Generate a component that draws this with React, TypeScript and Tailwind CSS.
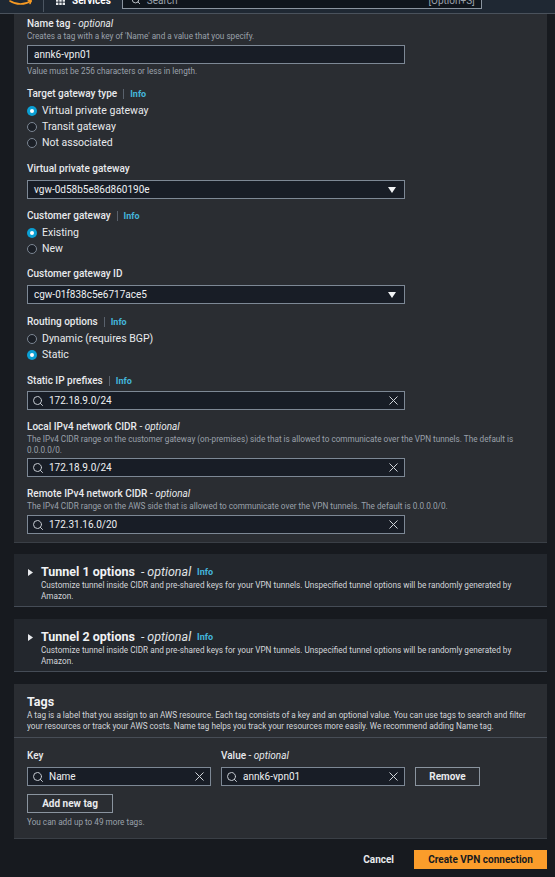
import React from 'react';
import { Search, X } from 'lucide-react';

const Info = ({ className = '' }: { className?: string }) => (
  <span className={`text-[9px] font-bold text-[#44b6dc] ${className}`}>Info</span>
);

function Label({ children, info }: { children: React.ReactNode; info?: boolean }) {
  return (
    <div className="flex h-[14px] items-center text-[10px] font-medium leading-[14px] text-[#e8eaed]">
      <span>{children}</span>
      {info && (
        <>
          <span className="mx-[6px] h-[10px] w-px bg-[#59616c]" />
          <Info />
        </>
      )}
    </div>
  );
}

const Optional = () => (
  <span className="font-normal">
    {' '}- <i>optional</i>
  </span>
);

function Desc({ children }: { children: React.ReactNode }) {
  return <div className="text-[8.2px] leading-[11px] text-[#9aa1ab]">{children}</div>;
}

function Radio({ label, checked }: { label: string; checked?: boolean }) {
  return (
    <div className="flex h-[16px] items-center gap-[5px]">
      {checked ? (
        <span className="flex h-[10px] w-[10px] items-center justify-center rounded-full bg-[#0b9fd3]">
          <span className="h-[4px] w-[4px] rounded-full bg-white" />
        </span>
      ) : (
        <span className="h-[10px] w-[10px] rounded-full border border-[#7c8693] bg-[#1b1f26]" />
      )}
      <span className="text-[10.5px] text-[#e8eaed]">{label}</span>
    </div>
  );
}

function Field({
  value,
  search,
  clear,
  select,
  className = '',
}: {
  value: string;
  search?: boolean;
  clear?: boolean;
  select?: boolean;
  className?: string;
}) {
  return (
    <div
      className={`flex h-[19px] items-center border border-[#7d8895] bg-[#181d26] pr-[6px] ${
        search ? 'pl-[4px]' : 'pl-[6px]'
      } ${className}`}
    >
      {search && <Search size={12} strokeWidth={2} className="mr-[5px] text-[#c3c8cf]" />}
      <span className="flex-1 text-[10px] text-[#eef0f2]">{value}</span>
      {clear && <X size={15} strokeWidth={1.6} className="-mr-[3px] text-[#d0d4d9]" />}
      {select && (
        <svg width="8" height="6" viewBox="0 0 8 6" className="mr-[2px]">
          <path d="M0 0h8L4 6z" fill="#f1f3f5" />
        </svg>
      )}
    </div>
  );
}

function Tunnel({ n }: { n: number }) {
  return (
    <div className="border-b border-[#454c56] bg-[#23272d] pb-[4px] pl-[14px] pr-[10px] pt-[10px]">
      <div className="flex h-[16px] items-center text-[#f0f2f4]">
        <svg width="5" height="7" viewBox="0 0 5 7">
          <path d="M0 0l5 3.5L0 7z" fill="#e8eaed" />
        </svg>
        <span className="ml-[8px] text-[12.5px] font-bold">Tunnel {n} options</span>
        <span className="ml-[6px] text-[12.5px] italic text-[#e0e3e6]">- optional</span>
        <Info className="ml-[6px] mt-[2px]" />
      </div>
      <div className="pl-[13px] text-[8.2px] leading-[11px] text-[#d3d6da]">
        Customize tunnel inside CIDR and pre-shared keys for your VPN tunnels. Unspecified tunnel options will be randomly generated by Amazon.
      </div>
    </div>
  );
}

export default function App() {
  return (
    <div className="h-[877px] w-[555px] overflow-hidden bg-[#171a1f] font-['Roboto',sans-serif]">
      {/* top nav, scrolled so only the lower part shows */}
      <div className="h-[14px] overflow-hidden border-b border-[#4a525c] bg-[#1f2833]">
        <div className="-mt-[15px] flex h-[30px] items-center">
          <svg width="24" height="8" viewBox="0 0 24 8" className="ml-[9px] mt-[6px]">
            <path d="M1 2c6 4 15 4 21 0" stroke="#f79a23" strokeWidth="1.6" fill="none" strokeLinecap="round" />
            <path d="M19 1l3.2 1L21 4.6" stroke="#f79a23" strokeWidth="1.4" fill="none" strokeLinecap="round" />
          </svg>
          <span className="ml-[10px] h-[24px] w-px bg-[#4b5561]" />
          <svg width="9" height="9" viewBox="0 0 9 9" className="ml-[12px]">
            {[0, 3.3, 6.6].map((y) =>
              [0, 3.3, 6.6].map((x) => <rect key={`${x}-${y}`} x={x} y={y} width="2.4" height="2.4" fill="#e8eaed" />)
            )}
          </svg>
          <span className="ml-[7px] text-[10px] font-bold text-white">Services</span>
          <div className="ml-[11px] flex h-[18px] w-[360px] items-center border border-[#8a949f] bg-[#0f151c] pl-[8px] pr-[6px]">
            <Search size={10} strokeWidth={2.2} className="text-[#c3c8cf]" />
            <span className="ml-[6px] flex-1 text-[10px] text-[#9aa1ab]">Search</span>
            <span className="text-[10px] text-[#9aa1ab]">[Option+S]</span>
          </div>
        </div>
      </div>

      <div className="ml-[14px] mr-[8px] flex flex-col">
        {/* main panel */}
        <div className="flex flex-col gap-[10px] border-b border-[#3a3f46] bg-[#2a2d32] px-[13px] pb-[8px] pt-[3px]">
          <div>
            <Label>
              Name tag<Optional />
            </Label>
            <Desc>Creates a tag with a key of 'Name' and a value that you specify.</Desc>
            <Field value="annk6-vpn01" className="mt-[3px] w-[378px]" />
            <div className="mt-[2px]">
              <Desc>Value must be 256 characters or less in length.</Desc>
            </div>
          </div>

          <div className="pb-px">
            <Label info>Target gateway type</Label>
            <div className="mt-[2px]">
              <Radio label="Virtual private gateway" checked />
              <Radio label="Transit gateway" />
              <Radio label="Not associated" />
            </div>
          </div>

          <div>
            <Label>Virtual private gateway</Label>
            <Field value="vgw-0d58b5e86d860190e" select className="mt-[4px] w-[378px]" />
          </div>

          <div>
            <Label info>Customer gateway</Label>
            <div className="mt-[2px]">
              <Radio label="Existing" checked />
              <Radio label="New" />
            </div>
          </div>

          <div className="pb-px">
            <Label>Customer gateway ID</Label>
            <Field value="cgw-01f838c5e6717ace5" select className="mt-[4px] w-[378px]" />
          </div>

          <div className="pb-px">
            <Label info>Routing options</Label>
            <div className="mt-[2px]">
              <Radio label="Dynamic (requires BGP)" />
              <Radio label="Static" checked />
            </div>
          </div>

          <div>
            <Label info>Static IP prefixes</Label>
            <Field value="172.18.9.0/24" search clear className="mt-[3px] w-[378px]" />
          </div>

          <div>
            <Label>
              Local IPv4 network CIDR<Optional />
            </Label>
            <Desc>
              The IPv4 CIDR range on the customer gateway (on-premises) side that is allowed to communicate over the VPN tunnels. The default is 0.0.0.0/0.
            </Desc>
            <Field value="172.18.9.0/24" search clear className="mt-[2px] w-[378px]" />
          </div>

          <div>
            <Label>
              Remote IPv4 network CIDR<Optional />
            </Label>
            <Desc>
              The IPv4 CIDR range on the AWS side that is allowed to communicate over the VPN tunnels. The default is 0.0.0.0/0.
            </Desc>
            <Field value="172.31.16.0/20" search clear className="mt-[3px] w-[378px]" />
          </div>
        </div>

        <div className="mt-[11px] flex flex-col gap-[12px]">
          <Tunnel n={1} />
          <Tunnel n={2} />

          {/* tags */}
          <div className="border-b border-[#3a3f46] bg-[#2a2d32]">
            <div className="border-b border-[#474d56] px-[13px] pb-[5px] pt-[9px]">
              <div className="text-[12.5px] font-bold leading-[17px] text-[#f0f2f4]">Tags</div>
              <div className="text-[8.2px] leading-[11px] text-[#d3d6da]">
                A tag is a label that you assign to an AWS resource. Each tag consists of a key and an optional value. You can use tags to search and filter your resources or track your AWS costs. Name tag helps you track your resources more easily. We recommend adding Name tag.
              </div>
            </div>
            <div className="px-[13px] pb-[10px] pt-[11px]">
              <div className="flex items-end gap-[10px]">
                <div className="w-[184px]">
                  <Label>Key</Label>
                  <Field value="Name" search clear className="mt-[4px]" />
                </div>
                <div className="w-[184px]">
                  <Label>
                    Value<Optional />
                  </Label>
                  <Field value="annk6-vpn01" search clear className="mt-[4px]" />
                </div>
                <button className="h-[19px] w-[65px] border border-[#8a949f] text-[10px] font-bold text-[#e8eaed]">
                  Remove
                </button>
              </div>
              <button className="mt-[8px] h-[19px] w-[86px] border border-[#8a949f] text-[10px] font-bold text-[#e8eaed]">
                Add new tag
              </button>
              <div className="mt-[2px] text-[8.2px] leading-[12px] text-[#9aa1ab]">You can add up to 49 more tags.</div>
            </div>
          </div>
        </div>

        <div className="mt-[11px] flex items-center justify-end">
          <span className="mr-[20px] text-[10px] font-bold text-[#e8eaed]">Cancel</span>
          <button className="h-[19px] w-[133px] bg-[#fb9d2b] text-[10px] font-bold text-[#16191f]">
            Create VPN connection
          </button>
        </div>
      </div>
    </div>
  );
}
